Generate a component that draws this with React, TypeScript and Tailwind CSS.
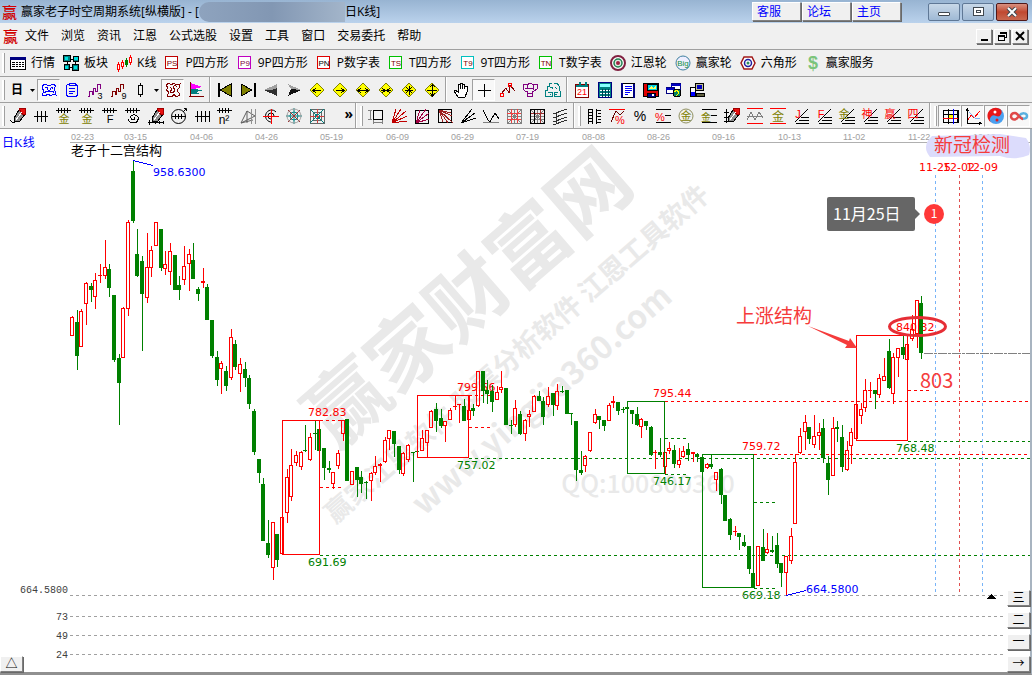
import type { ReactNode } from "react";

const UI_FONT = 'font-["Open_Sans","Noto_Sans_CJK_SC",sans-serif]';

interface PathProps {
  d: string;
  c?: string;
  f?: string;
  w?: number;
}

function P({ d, c = "#000", f = "none", w = 1 }: PathProps) {
  return <path d={d} stroke={c} fill={f} strokeWidth={w} />;
}

interface GlyphProps {
  x: number;
  y: number;
  s: number;
  c?: string;
  bold?: boolean;
  children: ReactNode;
}

function T({ x, y, s, c = "#000", bold, children }: GlyphProps) {
  return (
    <text x={x} y={y} fontSize={s} fill={c} fontWeight={bold ? "bold" : "normal"} textAnchor="middle">
      {children}
    </text>
  );
}

function Icon({ children, smooth }: { children: ReactNode; smooth?: boolean }) {
  return (
    <svg
      width="20"
      height="20"
      viewBox="0 0 20 20"
      shapeRendering={smooth ? "auto" : "crispEdges"}
      className='shrink-0 font-["Liberation_Sans","Noto_Sans_CJK_SC",sans-serif]'
    >
      {children}
    </svg>
  );
}

const comb = <P d="M2 4.5H17M4.5 2V7M7.5 2V7M10.5 2V7M13.5 2V7" />;
const fan = <P d="M5 17.5H18M8 14.5H18M10 11.5H18M4 16L17 3" />;
const diamond = <P d="M10 3L17 10L10 17L3 10Z" f="#ffff00" c="#808000" />;
const pen = (
  <>
    <P d="M6 12L11 4L17 8L12 15L6 16Z" f="#909090" />
    <P d="M11 3L17 2L18 8L15 9Z" f="#e81010" c="#a00000" />
    <P d="M8 14L14 6" c="#fff" />
  </>
);

interface Tool {
  name: string;
  icon: ReactNode;
  pressed?: boolean;
  smooth?: boolean;
}

// second bar, split where the separators are
const periodTools: Tool[] = [
  {
    name: "形态",
    pressed: true,
    icon: (
      <>
        <P d="M3 6L6 4L8 5H12L14 4L17 6L15 8L16 11L17 15L14 14L12 16L9 14L6 16L3 15L5 11L3 8Z" c="#00f" />
        <P d="M6 8Q8 6 9 9M11 9Q13 6 14 9M5 13L8 11L11 12L14 11L15 13M8 9L10 11L12 9" c="#00f" />
      </>
    ),
  },
  {
    name: "剪贴板",
    icon: (
      <>
        <P d="M7 4.5H5.5L4.5 6V15L6 16.5H14L15.5 15V6L14 4.5H13" c="#00f" />
        <P d="M7 3.5H13V5.5H7ZM7 8.5H13M7 11.5H13M7 13.5H11" c="#00f" />
      </>
    ),
  },
  {
    name: "三浪",
    icon: (
      <>
        <P d="M3 16.5H4.5V11.5H7.5V15M7.5 14.5H8.5V8.5H10.5V12M10.5 11.5H12.5V4.5H15.5V9" c="#800080" />
        <T x={15} y={19} s={9}>3</T>
      </>
    ),
  },
  {
    name: "九浪",
    icon: (
      <>
        <P d="M3 16.5H4.5V11.5H7.5V15M7.5 14.5H8.5V8.5H10.5V12M10.5 11.5H12.5V4.5H15.5V9" c="#800000" />
        <T x={16} y={19} s={9}>9</T>
      </>
    ),
  },
  { name: "蜡烛", icon: <P d="M7.5 5.5H11.5V14.5H7.5ZM9.5 3V5M9.5 15V17" /> },
];

const viewTools: Tool[] = [
  {
    name: "筹码",
    pressed: true,
    icon: (
      <>
        <P d="M3 5L6 3L8 5L11 3L13 5L17 4L16 8L14 10L17 15L13 17L11 14L9 17L4 16L6 12L3 10L5 8Z" c="#800000" />
        <P d="M7 7L9 9L7 12L10 13L12 10L10 7Q12 4 14 7" c="#800000" />
      </>
    ),
  },
  {
    name: "分布",
    icon: (
      <>
        <P d="M5 3L16 7L5 10Z" c="none" f="#ff00ff" />
        <P d="M5 9L18 10L10 12L14 14H5Z" c="none" f="#008080" />
        <P d="M4.5 2V17M3 16.5H18" c="#800000" />
      </>
    ),
  },
];

const navTools: Tool[] = [
  { name: "最前", icon: <><P d="M3.5 3V17" w={2} /><P d="M16 4V16L5 10Z" f="#808000" /></> },
  { name: "最后", icon: <><P d="M16.5 3V17" w={2} /><P d="M3 4V16L14 10Z" f="#808000" /></> },
  { name: "向前", icon: <><P d="M3 10L16 4V8L11 10Z" c="none" f="#a0a0a0" /><P d="M3 10L16 16V8L11 10Z" c="none" f="#303030" /></> },
  { name: "向后", icon: <><P d="M17 10L4 4L7 9Z" c="none" f="#a0a0a0" /><P d="M17 10L4 16L7 9Z" c="none" f="#101010" /></> },
  { name: "左移", icon: <>{diamond}<P d="M6 10.5H14M9 8L6 10.5L9 13" /></> },
  { name: "右移", icon: <>{diamond}<P d="M6 10.5H14M11 8L14 10.5L11 13" /></> },
  { name: "放宽", icon: <>{diamond}<P d="M5 10.5H15M8 8L5 10.5L8 13M12 8L15 10.5L12 13" /></> },
  { name: "收窄", icon: <>{diamond}<P d="M5 10.5H15M6 8L9 10.5L6 13M14 8L11 10.5L14 13" /></> },
  { name: "缩小", icon: <>{diamond}<P d="M6 10.5H14M10.5 6V15M7 7L13 13M13 7L7 13" /></> },
  { name: "放大", icon: <>{diamond}<P d="M5 10.5H15M10.5 5V16M8 7L10.5 5L13 7M8 13L10.5 16L13 13" /></> },
];

const pointerTools: Tool[] = [
  { name: "抓手", icon: <P d="M7 17L3 11L4 10L7 12V4H9V9V3H11V9V4H13V9L14 6H16V12L14 17Z" f="#fff" /> },
  { name: "十字", pressed: true, icon: <P d="M4 10.5H17M10.5 4V17" /> },
  {
    name: "折线",
    icon: (
      <>
        <P d="M4 14L9 8L12 13L13 5L18 11" c="#800000" />
        <circle cx="5" cy="15" r="2" fill="none" stroke="#f00" />
        <circle cx="13" cy="5" r="2" fill="none" stroke="#f00" />
      </>
    ),
  },
  {
    name: "大脑",
    icon: <P d="M3.5 4.5H8L10 3L13 4.5H17V9L14 11H12V16H7.5V11H5L3 9ZM7 4.5V8H13V5M8 13H12M5 8H8M12 8L14 10" c="#800080" />,
  },
  {
    name: "云图",
    icon: <P d="M9 3H6V6H4V10H2.5V16H9V12H5M11 3H14L16 6V9L17.5 12V16H11V12H15M7 7H9V9M12 7L14 9M7 14H8M12 14H14" c="#008080" />,
  },
];

const systemTools: Tool[] = [
  {
    name: "日历",
    icon: (
      <>
        <P d="M3.5 4.5H16.5V17.5H3.5Z" f="#fff" c="#800000" />
        <P d="M4 5.5H16M7.5 2V6M13.5 2V6" c="#008080" w={2} />
        <T x={10} y={15} s={9} c="#f00">21</T>
      </>
    ),
  },
  {
    name: "计算器",
    icon: (
      <>
        <P d="M3.5 2.5H16.5V17.5H3.5Z" f="#008080" c="#000080" />
        <P d="M5 5.5H15" c="#8ff" w={3} />
        <P d="M5 10H15M5 13H15M5 16H15" c="#fff" />
        <P d="M7.5 9V17M10.5 9V17M13.5 9V17" c="#004050" />
      </>
    ),
  },
  {
    name: "记事本",
    icon: (
      <>
        <P d="M3.5 3.5H16.5V17.5H3.5Z" f="#fff" />
        <P d="M3.5 3V18M16 4V18" c="#000080" w={2} />
        <P d="M7 6.5H14M7 8.5H14M7 10.5H14M7 12.5H12M7 14.5H10" c="#00f" />
      </>
    ),
  },
  {
    name: "保存",
    icon: (
      <>
        <P d="M2.5 3.5H17.5V16.5H2.5Z" f="#e00000" />
        <P d="M6 4H16V10H6Z" f="#00d0e0" />
        <P d="M7 9L10 6L12 8L15 5V9Z" f="#ffff60" c="none" />
        <P d="M6 13H14V17H6Z" f="#000080" />
        <P d="M11 14H13V16H11Z" f="#fff" c="none" />
      </>
    ),
  },
  {
    name: "窗口",
    icon: (
      <>
        <P d="M7.5 3.5H16.5V9.5H7.5Z" f="#fff" c="#000080" />
        <P d="M2.5 7.5H10.5V13.5H2.5Z" f="#fff" c="#000080" />
        <P d="M7 4.5H17M2 8.5H10" c="#0000c0" w={2} />
        <circle cx="13" cy="13" r="4" fill="#008060" stroke="#000" />
        <P d="M10 12L13 10L15 13L12 16" c="#ffff00" />
      </>
    ),
  },
  {
    name: "联网",
    icon: (
      <>
        <P d="M8.5 3.5H16.5V10.5H8.5Z" f="#c0c090" />
        <P d="M10 5H15V9H10Z" f="#0000c0" c="none" />
        <P d="M9 13H17V16H9Z" f="#606040" />
        <P d="M3.5 7.5H8.5V16.5H3.5Z" f="#fff" />
        <P d="M4 12H8V16H4Z" f="#00f" c="none" />
      </>
    ),
  },
];

const gannTools: Tool[] = [
  { name: "画笔", icon: <>{pen}<P d="M2 14L5 17L8 15" /></> },
  { name: "刻度", icon: <P d="M3 10.5H17M6.5 5V16M10.5 5V16M14.5 5V16" /> },
  { name: "金分割一", icon: <>{comb}<T x={10} y={17} s={11} c="#808000">金</T></> },
  { name: "金分割二", icon: <>{comb}<T x={10} y={17} s={11} c="#808000">金</T></> },
  { name: "斐波那契", icon: <>{comb}<T x={10} y={17} s={11}>F</T></> },
  { name: "螺旋", icon: <>{comb}<P d="M6 13Q5 17 11 17Q16 16 15 11Q12 7 8 10Q7 14 11 14Q13 12 11 11" /></> },
  { name: "测量", icon: <>{pen}<P d="M2 16.5H18M3.5 14V19M9.5 15V18M13.5 15V18M17.5 15V18" /></> },
  {
    name: "圆周",
    smooth: true,
    icon: (
      <>
        <circle cx="9.5" cy="10.5" r="7" fill="none" stroke="#000" />
        <P d="M3 10.5H17M6.5 8V13M9.5 8V13M12.5 8V13M14 6L17 3M15 2.5H17.5V5" />
      </>
    ),
  },
  { name: "等分", icon: <P d="M3 10.5H18M5.5 5V16M9.5 5V16M13.5 5V16M17.5 5V16" /> },
  { name: "平方", icon: <>{comb}<T x={9} y={18} s={12}>n²</T></> },
  { name: "三角", smooth: true, icon: <><P d="M3 17L9 5L17 10L3 17L15 14M9 5V17" c="#606060" /><P d="M13.5 3V18M17.5 3V18" c="#909090" /></> },
  {
    name: "圆弧",
    smooth: true,
    icon: (
      <>
        <P d="M15 6A6 6 0 1 0 11 16M13 10A3 3 0 1 0 10 13" />
        <P d="M10.5 3V18M2 10.5H18" c="#f00" />
      </>
    ),
  },
  {
    name: "放射",
    smooth: true,
    icon: (
      <>
        <circle cx="10" cy="10" r="4" fill="none" stroke="#008080" />
        <P d="M10 2V18M2 10H18" c="#008080" />
        <P d="M4 4L16 16M16 4L4 16" c="#a03030" />
        <circle cx="10" cy="10" r="7" fill="none" stroke="#a0a0a0" />
      </>
    ),
  },
  {
    name: "四方网",
    icon: (
      <>
        <P d="M3.5 3.5H17.5V17.5H3.5ZM6.5 6.5H14.5V14.5H6.5Z" c="#606868" />
        <P d="M3 3L17 17M17 3L3 17" c="#008080" />
        <P d="M10.5 3V17M3 10.5H17" c="#d04040" />
        <circle cx="10.5" cy="10.5" r="2" fill="none" stroke="#008080" />
      </>
    ),
  },
];

const lineTools: Tool[] = [
  { name: "矩形", icon: <><P d="M7.5 4.5H16.5V13.5H7.5Z" /><P d="M2 4.5H6M2 13.5H6M4.5 4V14M7.5 14V18M16.5 14V18M7 16.5H17" c="#808080" /></> },
  { name: "扇形线", icon: <P d="M3 17L7 3M3 17L12 3M3 17L17 5M3 17L18 10M3 17L18 15" c="#c00000" /> },
  { name: "扇形框", icon: <><P d="M3.5 4.5H16.5V17.5H3.5Z" /><P d="M4 17L8 4M4 17L14 3M4 17L17 7M4 17L17 13" c="#a00040" /></> },
  { name: "下扇形框", icon: <><P d="M3.5 3.5H16.5V16.5H3.5Z" /><P d="M4 4L8 16M4 4L13 17M4 4L18 17M4 4L17 10M4 4L16 7" c="#a02020" /></> },
  { name: "角度线", icon: <P d="M3 17L14 3M3 17L17 7M3 17L18 12M3 17L9 13" /> },
  { name: "折返", icon: <><P d="M2 4L7 14L9 16L14 7L18 13" /><P d="M2 16.5H18" c="#808080" /></> },
  { name: "网格一", icon: <><P d="M3.5 3.5H17.5V17.5H3.5ZM3 10.5H17M10.5 3V17" c="#808080" /><P d="M4 4L17 17M17 4L4 17" c="#808080" /><P d="M3 7.5H17M3 13.5H17M7.5 3V17M13.5 3V17" c="#f04040" /></> },
  { name: "网格二", icon: <><P d="M3 10.5H17M10.5 3V17M4 4L17 17M17 4L4 17M3 13.5H17" c="#808080" /><P d="M13.5 3V17M3 7.5H17" c="#a03030" /><P d="M3.5 3.5H17.5V17.5H3.5ZM7.5 3V17" /></> },
  { name: "平行线", icon: <P d="M3 8L17 3M3 12L17 7M3 16L17 11M3 19L17 14M6.5 6V18" c="#303030" /> },
];

const fanChars = [
  { ch: "J", c: "#f00" },
  { ch: "F", c: "#f00" },
  { ch: "金", c: "#808000" },
  { ch: "神", c: "#f00" },
  { ch: "赢", c: "#f00" },
  { ch: "四", c: "#f00" },
];

const percentTools: Tool[] = [
  { name: "量尺", icon: <P d="M4.5 3V18M8.5 3V18M4 3.5H9M4 6.5H9M4 9.5H9M4 12.5H9M4 15.5H9M12 4.5H17M14 7.5H17M12 10.5H17M14 13.5H17M12 16.5H17M12.5 3V18" /> },
  { name: "百分比线", icon: <><P d="M2 3.5H18" c="#f00" /><P d="M4 16L9 5L13 9L17 5" c="#600" /><T x={13} y={18} s={11} c="#f00">%</T></> },
  { name: "百分比", icon: <T x={10} y={15} s={14}>%</T> },
  { name: "百分比带", icon: <><P d="M3 3.5H18M12 9.5H18M3 16.5H18" /><T x={7} y={15} s={11} c="#f00">%</T></> },
  { name: "金圈", smooth: true, icon: <><circle cx="10" cy="10" r="7" fill="none" stroke="#909060" /><T x={10} y={14} s={11} c="#808000">金</T></> },
  { name: "金线", icon: <><P d="M3 3.5H18M12 9.5H18M3 16.5H18" /><T x={7} y={15} s={10} c="#808000">金</T></> },
  { name: "标尺笔", icon: <>{pen}<P d="M4.5 3V17M2 6.5H7M2 11.5H7M2 15.5H7" /></> },
  { name: "波浪", icon: <><P d="M2 2.5H18M2 17.5H18" c="#f00" /><P d="M2 14L6 6L10 14L14 6L18 12M2 10.5H18" c="#808080" /></> },
  { name: "金通道", icon: <><P d="M2 2.5H18M2 17.5H18" c="#f00" /><T x={10} y={15} s={12} c="#808000">金</T></> },
  ...fanChars.map((f) => ({ name: f.ch, icon: <>{fan}<T x={7} y={12} s={11} c={f.c}>{f.ch}</T></> })),
];

const layoutTools: Tool[] = [
  { name: "四宫", pressed: true, icon: <><P d="M8 8H13V13H8Z" f="#ffff00" c="none" /><P d="M3 4.5H18V16.5H3.5V4M8.5 3V18M17.5 4V17M3 8.5H18" /><P d="M3 12.5H18" c="#f00" /><P d="M13.5 3V18" c="#00f" /></> },
  { name: "走势", pressed: true, icon: <><P d="M4.5 3V17.5H18M3 5L4.5 3L6 5M16 16L18 17.5L16 19" /><P d="M5 14L8 9L11 12L17 5" c="#f00" /><P d="M6 6L9 9L13 13L17 12" c="#80b0f0" /></> },
  { name: "太极", pressed: true, smooth: true, icon: <><circle cx="10" cy="10" r="8" fill="#4aa0f0" /><path d="M13 2.5A8 8 0 1 0 6 17A4 4 0 0 1 10 10A4 4 0 0 0 13 2.5Z" fill="#e81818" /><circle cx="9" cy="6" r="1.5" fill="#fff" /><circle cx="11" cy="14" r="1.5" fill="#e81818" /></> },
  {
    name: "无限",
    pressed: true,
    smooth: true,
    icon: (
      <>
        <path d="M10 10C13 6 18 7 18 10S13 14 10 10" fill="none" stroke="#5ab0e0" strokeWidth="2.5" />
        <path d="M14 13C11 13 9 7 6 7S2 9 2 10.5S4 14 6 13.5S9 11 10 10" fill="none" stroke="#e04848" strokeWidth="2.5" />
      </>
    ),
  },
];

function letterBox(text: string, border: string, color: string) {
  return (
    <>
      <rect x="3.5" y="3.5" width="12" height="12" fill="#fff" stroke={border} />
      <T x={10} y={13} s={8} c={color}>{text}</T>
    </>
  );
}

const mainTools: Tool[] = [
  {
    name: "行情",
    icon: <><P d="M2.5 4.5H17.5V16.5H2.5Z" f="#fff" /><P d="M2 5H18" c="#000080" w={3} /><P d="M4 9.5H16M4 11.5H16M4 13.5H16" /><P d="M7.5 7V16M10.5 7V16M13.5 7V16" c="#fff" /></>,
  },
  {
    name: "板块",
    icon: <><P d="M2.5 2.5H9.5V8.5H2.5ZM12.5 3.5H17.5V8.5H12.5ZM3.5 11.5H8.5V16.5H3.5ZM11.5 11.5H17.5V17.5H11.5Z" f="#008080" /><P d="M4 4H7V7H4ZM13 4H17V7H13ZM4 13H7V16H4ZM13 13H16V16H13Z" f="#00e0e0" c="none" /><P d="M9 6.5H13M9 14.5H12M6.5 8V12M14.5 8V12" /></>,
  },
  {
    name: "K线",
    icon: <><P d="M4.5 9V19M8.5 7V16M16.5 2V12" c="#f00" /><P d="M3.5 11.5H5.5V16.5H3.5ZM7.5 9.5H9.5V13.5H7.5ZM15.5 4.5H17.5V9.5H15.5Z" c="#f00" f="#fff" /><P d="M12.5 5V14M11.5 7.5H13.5V11.5H11.5Z" c="#008000" /></>,
  },
  { name: "P四方形", icon: letterBox("PS", "#c00000", "#800000") },
  { name: "9P四方形", icon: letterBox("P9", "#c000c0", "#800040") },
  { name: "P数字表", icon: letterBox("PN", "#e00000", "#000") },
  { name: "T四方形", icon: letterBox("TS", "#00c000", "#800000") },
  { name: "9T四方形", icon: letterBox("T9", "#00c0c0", "#800000") },
  { name: "T数字表", icon: letterBox("TN", "#00c000", "#800000") },
  {
    name: "江恩轮",
    smooth: true,
    icon: <><circle cx="10" cy="10" r="7" fill="#fff" stroke="#802040" strokeWidth="2" /><circle cx="10" cy="10" r="4" fill="#e0e8e0" stroke="#208050" strokeWidth="1.5" /><circle cx="10" cy="10" r="2" fill="#a02040" /></>,
  },
  {
    name: "赢家轮",
    smooth: true,
    icon: <><circle cx="10" cy="10" r="7" fill="#eef" stroke="#4080a0" /><T x={10} y={13} s={8} c="#109040">Big</T></>,
  },
  {
    name: "六角形",
    smooth: true,
    icon: <><P d="M6 4H14L17 10L14 16H6L3 10Z" c="#a01818" f="#fff" w={1.5} /><circle cx="10" cy="10" r="3.5" fill="none" stroke="#2020a0" strokeWidth="1.5" /><circle cx="10" cy="10" r="1.5" fill="#309060" /></>,
  },
  { name: "赢家服务", smooth: true, icon: <T x={10} y={16} s={18} c="#7cc47c" bold>$</T> },
];

function ToolButton({ tool }: { tool: Tool }) {
  return (
    <button
      aria-label={tool.name}
      className={
        tool.pressed
          ? "flex h-[22px] w-[23px] items-center justify-center border border-[#a0a0a0] border-r-white border-b-white bg-[#f8f8f8]"
          : "flex h-[22px] w-[23px] items-center justify-center"
      }
    >
      <Icon smooth={tool.smooth}>{tool.icon}</Icon>
    </button>
  );
}

function ToolGroup({ tools }: { tools: Tool[] }) {
  return (
    <div className="flex">
      {tools.map((t) => (
        <ToolButton key={t.name} tool={t} />
      ))}
    </div>
  );
}

function Separator() {
  return <div className="mx-[2px] h-full w-[2px] border-l border-[#a0a0a0] bg-white" />;
}

function Grip() {
  return <div className="mx-px h-5 w-[3px] shrink-0 border-r border-[#a0a0a0] bg-white" />;
}

function Caret() {
  return (
    <svg width="9" height="20" viewBox="0 0 9 20" className="shrink-0">
      <path d="M2 9H7L4.5 12Z" />
    </svg>
  );
}

const RAISED = "border border-white border-r-[#808080] border-b-[#808080] shadow-[1px_1px_0_#696969]";

const menus = ["文件", "浏览", "资讯", "江恩", "公式选股", "设置", "工具", "窗口", "交易委托", "帮助"];

function Logo() {
  return <span className="text-[15px] leading-4 font-medium text-[#d00000]">赢</span>;
}

function TitleBar() {
  const glass = "flex h-[18px] w-8 items-center justify-center rounded-[2px] border border-[#5f7896] bg-linear-to-b from-[#c8d8e8] to-[#9fb9d5]";
  return (
    <header className="flex h-[23px] items-center bg-linear-to-b from-[#98b4d2] to-[#bad2ec] pr-1 pl-[2px]">
      <Logo />
      <h1 className="ml-1 flex items-center text-xs whitespace-nowrap">
        赢家老子时空周期系统[纵横版] - [
        <span className="h-5 w-[146px] rounded-l-xl bg-linear-to-r from-[#8ea3be] via-[#8297b3] to-[#a3b5ca]" />
        日K线]
      </h1>
      <nav className="ml-auto flex gap-px">
        {["客服", "论坛", "主页"].map((t) => (
          <button key={t} className={`h-[19px] w-[49px] bg-[#f0f0f0] pl-1 text-left text-xs leading-4 text-[#0000ff] ${RAISED}`}>
            {t}
          </button>
        ))}
      </nav>
      <div className="ml-[27px] flex gap-[2px]">
        <button aria-label="最小化" className={glass}>
          <span className="mt-1 h-1 w-3 rounded-[1px] border border-[#404850] bg-white" />
        </button>
        <button aria-label="最大化" className={glass}>
          <span className="h-[9px] w-[11px] border border-[#404850] bg-white p-[2px]">
            <span className="block h-[3px] border border-[#404850]" />
          </span>
        </button>
        <button
          aria-label="关闭"
          className="flex h-[18px] w-8 items-center justify-center rounded-[2px] border border-[#501818] bg-linear-to-b from-[#d89080] via-[#c04830] to-[#c86850]"
        >
          <svg width="12" height="10" viewBox="0 0 12 10">
            <path d="M2 1L10 9M10 1L2 9" stroke="#404850" strokeWidth="4" />
            <path d="M2 1L10 9M10 1L2 9" stroke="#fff" strokeWidth="2" />
          </svg>
        </button>
      </div>
    </header>
  );
}

function MenuBar() {
  const small = `flex h-[15px] w-4 items-center justify-center bg-[#f0f0f0] ${RAISED}`;
  return (
    <div className="flex h-[27px] items-center border-b border-[#a0a0a0] pr-1 pl-[3px]">
      <Logo />
      <nav className="ml-[7px] flex gap-3 text-xs">
        {menus.map((m) => (
          <button key={m}>{m}</button>
        ))}
      </nav>
      <div className="ml-auto flex gap-[2px]">
        <button aria-label="最小化子窗口" className={small}>
          <span className="mt-2 h-[2px] w-[7px] bg-black" />
        </button>
        <button aria-label="还原子窗口" className={small}>
          <svg width="10" height="10" viewBox="0 0 10 10" shapeRendering="crispEdges">
            <P d="M3.5 3V1.5H9.5V6.5H8M3 2H10M1.5 4.5H7.5V9.5H1.5ZM1 5H8" />
          </svg>
        </button>
        <button aria-label="关闭子窗口" className={small}>
          <svg width="10" height="10" viewBox="0 0 10 10">
            <path d="M1 1L9 9M9 1L1 9" stroke="#000" strokeWidth="2" />
          </svg>
        </button>
      </div>
    </div>
  );
}

function Toolbars() {
  const row = "flex items-center overflow-hidden border-b border-[#a0a0a0] pr-[2px] pl-px";
  return (
    <>
      <div className={`${row} h-[27px]`}>
        <Grip />
        <div className="ml-[2px] flex gap-[6px] text-xs whitespace-nowrap">
          {mainTools.map((t) => (
            <button key={t.name} className="flex items-center gap-[3px]">
              <Icon smooth={t.smooth}>{t.icon}</Icon>
              {t.name}
            </button>
          ))}
        </div>
      </div>
      <div className={`${row} h-[26px]`}>
        <Grip />
        <button className="flex items-center text-xs font-bold">
          <span className="w-[22px] text-center">日</span>
          <Caret />
        </button>
        <ToolGroup tools={periodTools} />
        <Caret />
        <ToolGroup tools={viewTools} />
        <Separator />
        <ToolGroup tools={navTools} />
        <Separator />
        <ToolGroup tools={pointerTools} />
        <Separator />
        <ToolGroup tools={systemTools} />
      </div>
      <div className={`${row} h-[26px]`}>
        <Grip />
        <ToolGroup tools={gannTools} />
        <button aria-label="更多" className="mb-1 ml-auto text-sm leading-5 font-bold">
          »
        </button>
        <Separator />
        <Grip />
        <ToolGroup tools={lineTools} />
        <Separator />
        <Grip />
        <ToolGroup tools={percentTools} />
        <Separator />
        <Grip />
        <ToolGroup tools={layoutTools} />
      </div>
    </>
  );
}

const RED = "#ff0000";
const GREEN = "#008000";

type Candle = [up: 0 | 1, x: number, high: number, top: number, bottom: number, low: number];

const candles: Candle[] = [
  [1, 72, 316, 317, 336, 336], [0, 77, 310, 322, 356, 370], [1, 81, 309, 311, 347, 347], [1, 86, 282, 283, 304, 325],
  [0, 91, 283, 286, 290, 302], [1, 95, 273, 280, 297, 309], [1, 100, 264, 275, 276, 283], [1, 105, 240, 267, 276, 279],
  [0, 109, 264, 269, 288, 297], [0, 114, 295, 295, 360, 362], [0, 119, 354, 358, 383, 425], [1, 123, 307, 308, 358, 358],
  [1, 128, 220, 222, 309, 316], [0, 133, 160, 171, 221, 223], [0, 137, 229, 254, 276, 277], [0, 142, 256, 261, 294, 351],
  [1, 147, 233, 267, 298, 303], [1, 151, 246, 250, 268, 277], [1, 156, 222, 222, 246, 246], [0, 161, 229, 229, 268, 271],
  [1, 165, 251, 264, 269, 275], [1, 170, 243, 251, 272, 285], [0, 175, 255, 255, 290, 290], [0, 179, 276, 285, 290, 300],
  [1, 184, 246, 266, 280, 285], [1, 189, 249, 254, 264, 291], [0, 193, 243, 260, 279, 279], [0, 198, 287, 289, 294, 301],
  [1, 203, 268, 281, 283, 288], [0, 207, 284, 287, 320, 320], [0, 212, 320, 320, 356, 358], [0, 217, 351, 357, 380, 386],
  [1, 221, 361, 363, 369, 394], [0, 226, 366, 371, 386, 391], [1, 231, 329, 337, 378, 380], [0, 235, 340, 344, 367, 370],
  [1, 240, 358, 364, 374, 392], [0, 245, 362, 369, 378, 387], [0, 249, 375, 378, 404, 409], [0, 254, 409, 411, 452, 455],
  [0, 259, 459, 459, 473, 483], [0, 263, 478, 484, 541, 541], [0, 268, 520, 543, 555, 558], [1, 273, 522, 522, 568, 580],
  [0, 277, 534, 534, 560, 567], [1, 282, 517, 517, 554, 554], [1, 287, 469, 477, 513, 523], [1, 291, 449, 465, 497, 501],
  [1, 296, 451, 455, 463, 466], [1, 301, 451, 452, 467, 470], [0, 305, 425, 450, 451, 452], [1, 310, 433, 437, 460, 461],
  [0, 315, 421, 433, 434, 450], [0, 319, 421, 429, 451, 451], [0, 324, 448, 448, 468, 480], [0, 329, 461, 468, 470, 473],
  [1, 333, 472, 472, 484, 489], [1, 338, 450, 453, 466, 469], [1, 343, 420, 420, 434, 441], [0, 347, 419, 419, 481, 481],
  [1, 352, 471, 471, 485, 485], [0, 357, 467, 467, 480, 497], [0, 361, 471, 477, 484, 493], [0, 366, 481, 482, 483, 499],
  [1, 371, 472, 473, 481, 501], [1, 375, 456, 466, 473, 475], [1, 380, 463, 464, 466, 482], [1, 385, 437, 440, 462, 463],
  [1, 389, 430, 430, 439, 450], [0, 394, 431, 431, 444, 457], [0, 399, 446, 446, 470, 474], [1, 403, 452, 453, 474, 476],
  [1, 408, 444, 445, 460, 462], [0, 413, 452, 452, 453, 482], [0, 417, 451, 451, 452, 452], [1, 422, 430, 438, 451, 451],
  [1, 427, 430, 430, 443, 457], [1, 431, 410, 411, 428, 428], [0, 436, 403, 409, 421, 432], [0, 441, 409, 418, 426, 428],
  [1, 445, 421, 421, 426, 442], [1, 450, 408, 410, 420, 420], [1, 455, 396, 406, 407, 410], [1, 459, 404, 404, 405, 423],
  [0, 464, 399, 406, 421, 421], [1, 469, 396, 410, 420, 420], [0, 473, 404, 408, 411, 416], [1, 478, 371, 371, 406, 407],
  [0, 483, 371, 371, 391, 403], [0, 487, 380, 390, 394, 404], [0, 492, 385, 391, 402, 412], [1, 497, 386, 392, 400, 400],
  [1, 501, 371, 387, 390, 393], [0, 506, 388, 388, 425, 425], [0, 511, 420, 425, 426, 434], [1, 515, 400, 408, 425, 427],
  [0, 520, 411, 414, 434, 435], [1, 525, 419, 420, 434, 441], [1, 529, 410, 414, 417, 427], [1, 534, 395, 396, 412, 412],
  [0, 539, 391, 396, 401, 401], [0, 543, 397, 401, 417, 425], [1, 548, 387, 396, 405, 407], [0, 553, 393, 393, 405, 416],
  [1, 557, 384, 391, 406, 410], [0, 562, 386, 391, 392, 393], [0, 567, 390, 390, 414, 414], [0, 571, 413, 413, 414, 425],
  [0, 576, 421, 421, 470, 481], [0, 581, 451, 470, 473, 475], [1, 585, 455, 456, 466, 472], [1, 590, 432, 432, 451, 452],
  [1, 595, 409, 414, 423, 424], [0, 599, 416, 416, 420, 429], [0, 604, 420, 420, 426, 431], [1, 609, 403, 405, 421, 421],
  [1, 613, 396, 401, 403, 408], [0, 618, 402, 402, 411, 415], [0, 623, 407, 409, 410, 413], [0, 627, 406, 407, 409, 410],
  [0, 632, 410, 410, 414, 424], [0, 637, 407, 414, 425, 426], [1, 641, 418, 419, 427, 438], [0, 646, 421, 421, 426, 430],
  [0, 651, 426, 427, 455, 456], [1, 655, 450, 452, 453, 469], [0, 660, 438, 452, 455, 457], [1, 665, 452, 452, 467, 474],
  [1, 669, 442, 448, 451, 454], [0, 674, 445, 450, 464, 468], [1, 679, 448, 460, 465, 468], [1, 683, 446, 451, 457, 458],
  [0, 688, 443, 449, 455, 461], [1, 693, 452, 452, 454, 462], [0, 697, 453, 454, 457, 462], [0, 702, 457, 457, 472, 472],
  [1, 707, 463, 464, 468, 469], [0, 711, 455, 464, 467, 469], [1, 716, 472, 472, 480, 491], [0, 721, 468, 469, 495, 504],
  [0, 725, 495, 495, 521, 521], [0, 730, 518, 519, 535, 540], [1, 735, 526, 531, 532, 536], [0, 739, 533, 533, 537, 550],
  [0, 744, 535, 542, 546, 547], [0, 749, 546, 546, 569, 574], [0, 753, 568, 573, 588, 588], [1, 758, 546, 546, 586, 586],
  [0, 763, 529, 547, 561, 561], [1, 767, 533, 549, 553, 554], [0, 772, 536, 550, 552, 553], [0, 777, 533, 545, 564, 568],
  [0, 781, 563, 563, 573, 587], [1, 786, 556, 556, 573, 595], [1, 791, 528, 536, 561, 564], [1, 795, 454, 462, 524, 524],
  [1, 800, 428, 436, 453, 454], [1, 805, 415, 422, 432, 450], [0, 809, 427, 427, 439, 444], [1, 814, 415, 436, 445, 448],
  [1, 819, 423, 432, 436, 450], [0, 823, 419, 428, 458, 463], [0, 828, 456, 463, 480, 495], [1, 833, 417, 428, 476, 476],
  [0, 837, 421, 427, 429, 442], [0, 842, 425, 437, 467, 472], [1, 847, 441, 450, 470, 471], [1, 851, 428, 432, 446, 464],
  [1, 856, 404, 404, 439, 441], [1, 861, 403, 409, 416, 424], [1, 865, 379, 390, 408, 412], [1, 870, 382, 390, 391, 398],
  [0, 875, 390, 390, 394, 409], [1, 879, 374, 378, 395, 398], [1, 884, 358, 376, 381, 381], [0, 889, 339, 351, 388, 389],
  [1, 893, 353, 357, 394, 404], [1, 898, 348, 348, 358, 377], [0, 903, 336, 347, 355, 359], [1, 907, 335, 344, 360, 360],
  [1, 912, 315, 329, 339, 341], [1, 917, 300, 300, 334, 348], [0, 921, 296, 303, 353, 359],
];

function CandleBar({ candle }: { candle: Candle }) {
  const [up, x, high, top, bottom, low] = candle;
  const color = up ? RED : GREEN;
  const hollow = up === 1 && bottom - top > 2;
  return (
    <g>
      {top > high && <rect x={x} y={high} width={1} height={top - high} fill={color} />}
      {low > bottom && <rect x={x} y={bottom} width={1} height={low - bottom} fill={color} />}
      {hollow ? (
        <rect x={x - 1.5} y={top + 0.5} width={3} height={bottom - top - 1} fill="none" stroke={color} />
      ) : (
        <rect x={x - 2} y={top} width={4} height={bottom - top} fill={color} />
      )}
    </g>
  );
}

const axisDates: [string, number][] = [
  ["02-23", 71], ["03-15", 124], ["04-06", 190], ["04-26", 255], ["05-19", 320], ["06-09", 386], ["06-29", 451], ["07-19", 516],
  ["08-08", 582], ["08-26", 647], ["09-16", 712], ["10-13", 778], ["11-02", 843], ["11-22", 908], ["12-13", 973],
];

const structures = [
  { x: 282, y: 420, w: 37, h: 134, c: RED },
  { x: 417, y: 395, w: 51, h: 62, c: RED },
  { x: 627, y: 401, w: 37, h: 72, c: GREEN },
  { x: 702, y: 454, w: 51, h: 133, c: GREEN },
  { x: 856, y: 335, w: 51, h: 105, c: RED },
];

const priceLabels: [string, number, number, string][] = [
  ["782.83", 308, 416, RED], ["691.69", 308, 566, GREEN], ["799.56", 457, 391, RED], ["757.02", 457, 469, GREEN],
  ["795.44", 653, 397, RED], ["746.17", 653, 485, GREEN], ["759.72", 742, 450, RED], ["669.18", 742, 599, GREEN],
  ["840.32", 896, 331, RED], ["768.48", 896, 452, GREEN], ["958.6300", 153, 176, "#0000ff"], ["664.5800", 806, 593, "#0000ff"],
  ["11-25", 919, 171, RED], ["12-02", 943, 171, RED], ["12-09", 966, 171, RED],
];

// horizontal dashed levels: x1, x2, y, colour
const levels: [number, number, number, string][] = [
  [320, 343, 420, RED], [320, 341, 487, RED], [320, 1030, 555, GREEN], [469, 491, 395, RED], [469, 491, 427, RED],
  [469, 1030, 458, GREEN], [665, 1030, 401, RED], [665, 687, 438, GREEN], [665, 687, 474, GREEN], [754, 1030, 454, RED],
  [754, 776, 502, GREEN], [754, 776, 588, GREEN], [908, 930, 390, RED], [908, 1030, 441, GREEN],
  [70, 1003, 595, "#a0a0a0"], [70, 1003, 616, "#a0a0a0"], [70, 1003, 635, "#a0a0a0"], [70, 1003, 654, "#a0a0a0"],
];

const axisValues: [string, number][] = [["664.5800", 593], ["73", 620], ["49", 639], ["24", 658]];

function Chart() {
  return (
    <svg viewBox="0 129 1030 543" className='block h-auto w-full font-["DejaVu_Sans","Noto_Sans_CJK_SC",sans-serif]'>
      <g fill="#e9e9e9" className='font-["Noto_Sans_CJK_SC",sans-serif]' textAnchor="middle">
        <text transform="translate(487 319) rotate(-41)" fontSize="80" fontWeight="bold">赢家财富网</text>
        <text transform="translate(523 361) rotate(-41)" fontSize="27" fontWeight="bold">赢家江恩软件 股票分析软件 江恩工具软件</text>
        <text transform="translate(549 408) rotate(-41)" fontSize="32" fontWeight="bold">www.yingjia360.com</text>
        <text x="648" y="493" fontSize="25" fontWeight="500">QQ:100800360</text>
      </g>

      <path d="M70 142.5H1030" stroke="#b0b0b0" />
      <g fontSize="9" fill="#a0a0a0" className='font-["Liberation_Sans",sans-serif]'>
        {axisDates.map(([d, x]) => (
          <text key={d} x={x} y={140}>{d}</text>
        ))}
      </g>
      <text x="2" y="147" fontSize="12" fill="#0000ff" className='font-["Liberation_Serif","Noto_Sans_CJK_SC",serif]'>日K线</text>
      <text x="71" y="155" fontSize="13">老子十二宫结构</text>

      <g fontSize="11">
        {priceLabels.map(([t, x, y, c]) => (
          <text key={t + x} x={x} y={y} fill={c}>{t}</text>
        ))}
      </g>
      <g fontSize="10" fill="#404040" textAnchor="end" className='font-["Liberation_Mono",monospace]'>
        {axisValues.map(([v, y]) => (
          <text key={v} x={68} y={y}>{v}</text>
        ))}
      </g>

      <g shapeRendering="crispEdges">
        {levels.map(([x1, x2, y, c]) => (
          <path key={`${x1}-${y}`} d={`M${x1} ${y + 0.5}H${x2}`} stroke={c} strokeDasharray="3 3" />
        ))}
        <path d="M924 353.5H1030" stroke="#808080" strokeDasharray="9 1 3 1" />
        <path d="M935.5 175V593M982.5 175V593" stroke="#78b4f8" strokeDasharray="3 3" />
        <path d="M959.5 175V593" stroke="#e05050" strokeDasharray="3 3" />
        {candles.map((c) => (
          <CandleBar key={c[1]} candle={c} />
        ))}
        {structures.map((s) => (
          <rect key={s.x} x={s.x + 0.5} y={s.y + 0.5} width={s.w} height={s.h} fill="none" stroke={s.c} />
        ))}
        <path d="M133 160.5L153 165.5M786 595.5L806 590.5" stroke="#0000ff" />
        <path d="M987 599H996L991.5 594Z" />
      </g>

      <path d="M932 136L1000 134L1026 138Q1032 146 1029 155Q1015 161 1000 156L930 157Q921 146 932 136Z" fill="#dcdcfc" />
      <g fill="#f53b3b">
        <text x="934" y="152" fontSize="19">新冠检测</text>
        <text x="736" y="323" fontSize="19">上涨结构</text>
        <text x="920" y="388" fontSize="20" className='font-["Noto_Sans_CJK_SC",sans-serif]'>803</text>
        <path d="M808 326L849 341L850 338L857 348L845 348L847 345Z" />
      </g>
      <ellipse cx="917.5" cy="326.5" rx="28" ry="9" fill="none" stroke="#e62e36" strokeWidth="3" />

      <rect x="827" y="197" width="88" height="34" rx="2" fill="#666" />
      <path d="M915 209L920 214L915 219Z" fill="#666" />
      <circle cx="934" cy="214" r="10" fill="#ff3838" />
      <g fill="#fff" className='font-["Noto_Sans_CJK_SC",sans-serif]'>
        <text x="833" y="220" fontSize="16">11月25日</text>
        <text x="934" y="218" fontSize="12" textAnchor="middle">1</text>
      </g>
    </svg>
  );
}

export default function App() {
  const paneButton = `flex h-4 w-[23px] items-center justify-center overflow-hidden bg-[#f0f0f0] text-xs leading-4 ${RAISED}`;
  return (
    <div className={`min-h-screen bg-[#f0f0f0] text-black ${UI_FONT}`}>
      <TitleBar />
      <MenuBar />
      <Toolbars />
      <main className="relative border-r-2 border-b-3 border-r-[#a8b4c0] border-b-[#909090] bg-white">
        <Chart />
        <div className="absolute right-0 bottom-0 flex flex-col gap-[6px]">
          {["三", "二", "一", "→"].map((t) => (
            <button key={t} className={paneButton}>{t}</button>
          ))}
        </div>
        <button className={`absolute bottom-0 left-0 ${paneButton}`}>△</button>
      </main>
    </div>
  );
}
